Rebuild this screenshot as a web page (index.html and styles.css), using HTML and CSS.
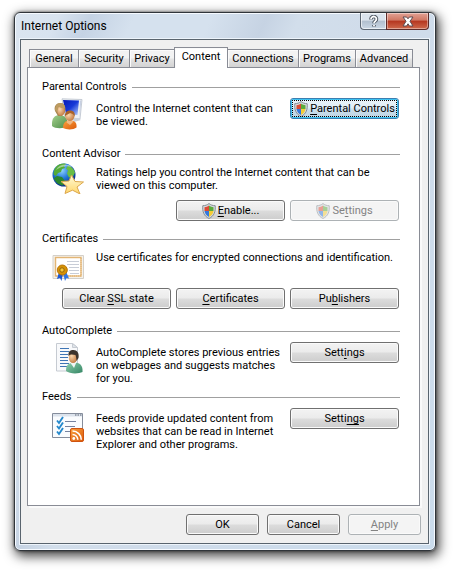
FILE: index.html
```html
<!DOCTYPE html>
<html lang="en">
<head>
<meta charset="utf-8">
<title>Internet Options</title>
<link rel="stylesheet" href="styles.css">
</head>
<body>
<svg class="defs" width="0" height="0" aria-hidden="true">
  <defs>
    <linearGradient id="screen" x1="0" y1="0" x2="1" y2="1"><stop offset="0" stop-color="#0719b5"/><stop offset=".5" stop-color="#1639d8"/><stop offset="1" stop-color="#b9d2fb"/></linearGradient>
    <linearGradient id="green" x1="0" y1="0" x2="1" y2="1"><stop offset="0" stop-color="#a5d18d"/><stop offset="1" stop-color="#4c8b48"/></linearGradient>
    <linearGradient id="teal" x1="0" y1="0" x2="1" y2="1"><stop offset="0" stop-color="#8fd0ae"/><stop offset="1" stop-color="#348564"/></linearGradient>
    <linearGradient id="orange" x1="0" y1="0" x2="1" y2="1"><stop offset="0" stop-color="#f9a13d"/><stop offset="1" stop-color="#dc5a0b"/></linearGradient>
    <radialGradient id="skin" cx=".35" cy=".35" r=".7"><stop offset="0" stop-color="#fbd8ae"/><stop offset="1" stop-color="#c47b43"/></radialGradient>
    <radialGradient id="globe" cx=".4" cy=".3" r=".7"><stop offset="0" stop-color="#8fd4ff"/><stop offset=".5" stop-color="#2378d8"/><stop offset="1" stop-color="#072c86"/></radialGradient>
    <linearGradient id="star" x1="0" y1="0" x2="0" y2="1"><stop offset="0" stop-color="#fffbd8"/><stop offset="1" stop-color="#ffd66a"/></linearGradient>
    <symbol id="shield" viewBox="0 0 14 16">
      <path d="M7 .5C5.500 2 3 2.700.8 2.700.3 8.500 1.800 13 7 15.500 12.200 13 13.700 8.500 13.200 2.700 11 2.700 8.500 2 7 .5z" fill="#d5dade" stroke="#858c92"/>
      <path d="M7 2.500C5.500 3.600 4 4 2.500 4.200V8H7z" fill="#dd4b34"/>
      <path d="M7 2.500c1.500 1.100 3 1.500 4.500 1.700V8H7z" fill="#5cab3c"/>
      <path d="M2.500 8C2.900 10.600 4.300 12.600 7 13.900V8z" fill="#3478dc"/>
      <path d="M11.500 8c-.4 2.600-1.800 4.600-4.500 5.900V8z" fill="#f5cc36"/>
    </symbol>
  </defs>
</svg>
<main class="window">
  <header class="titlebar">
    <h1 class="title">Internet Options</h1>
    <div class="caption">
      <button class="cap help" type="button" aria-label="Help"><svg width="10" height="13" viewBox="0 0 10 13" fill="none"><path d="M2 4.500V4a2.700 2.500 0 1 1 4.500 1.900C5.400 6.700 5 7 5 8.300M5 10v1.500" stroke="#4b545f" stroke-width="3.600"/><path d="M2 4.200V4a2.700 2.500 0 1 1 4.500 1.900C5.400 6.700 5 7 5 8.200M5 10v1.200" stroke="#fff" stroke-width="1.800"/></svg></button>
      <button class="cap close" type="button" aria-label="Close"><svg width="12" height="11" viewBox="0 0 12 11"><path d="M1 1h3.600L6 2.800 7.400 1H11L8 5.300 11 10H7.400L6 7.800 4.600 10H1l3-4.700z" fill="#fff" stroke="#5d4a51"/></svg></button>
    </div>
  </header>
  <div class="client">
    <div class="tabs" role="tablist">
      <button class="tab" type="button" role="tab">General</button>
      <button class="tab" type="button" role="tab">Security</button>
      <button class="tab" type="button" role="tab">Privacy</button>
      <button class="tab active" type="button" role="tab" aria-selected="true">Content</button>
      <button class="tab" type="button" role="tab">Connections</button>
      <button class="tab" type="button" role="tab">Programs</button>
      <button class="tab" type="button" role="tab">Advanced</button>
    </div>
    <div class="panel" role="tabpanel">
      <section class="group">
        <h2 class="heading">Parental Controls</h2>
        <div class="body">
          <svg class="icon" width="32" height="32" viewBox="0 0 32 32">
            <path d="M10 .8 30 1.500 28 21 13 19z" fill="#eef1f5" stroke="#b9c0cb" stroke-width=".8"/>
            <path d="M11 2 27 2.500 25.500 17 14 16z" fill="url(#screen)"/>
            <path d="M28 2.500 29.500 2.500 27.500 19z" fill="#c7d0e2"/>
            <path d="M20 20h6l3 2-7 2z" fill="#c9d0da"/>
            <path d="M0 28C-.5 21 2 17.500 7 17s9 3 9 11c-4 3-13 3-16 0z" fill="url(#green)"/>
            <path d="M3 13C1.500 8 4.500 5 8 5s6.500 3 5 9l-3 4H6z" fill="#a98650"/>
            <ellipse cx="9" cy="12.800" rx="3.800" ry="5" fill="url(#skin)"/>
            <path d="M3 12C3.500 7 5.500 5 8.500 5s4.500 2 4.500 5C9.500 11 7.500 9 6.500 8.500c0 2-1 3-1.500 5.500z" fill="#bd9c61"/>
            <path d="M11 30c0-5 2-7.500 7-7.500s7 2.500 6.500 7c-3 2.500-10 2.500-13.500.5z" fill="url(#orange)"/>
            <path d="M14.500 24.500 18 27l3-3-1-3h-4z" fill="#efb883"/>
            <circle cx="17.800" cy="18.300" r="4.600" fill="url(#skin)"/>
            <path d="M13 18.500c-.5-4 2-6 5-6s5.500 2 4.700 6c-1-2.500-2.700-3-4.700-3.500-1.500 1.500-3.500 1-5 3.500z" fill="#a9622a"/>
          </svg>
          <p class="text">Control the Internet content that can<br>be viewed.</p>
          <button class="btn focused" type="button"><svg class="shield" width="14" height="16"><use href="#shield"/></svg><span><u>P</u>arental Controls</span></button>
        </div>
      </section>
      <section class="group">
        <h2 class="heading">Content Advisor</h2>
        <div class="body wide">
          <svg class="icon" width="32" height="32" viewBox="0 0 32 32">
            <circle cx="12" cy="13" r="11.500" fill="url(#globe)"/>
            <path d="M4 5C7 1.500 12 1 14 2l-2 2 1 2-3 1-1 3-3 1-2 3-2-1C1 11 2 7 4 5z" fill="#55ab37"/>
            <path d="M16 3.500c3 .500 6 3.500 7 7l-2 4-4 1-2-4 1-3-2-2z" fill="#69bd45"/>
            <path d="m5 14 5 1 3 4-2 4.500C6 23 2.500 19 2 16z" fill="#2b872d"/>
            <path d="M4 8C7 2 16 1 20 5c-6-2-12 0-16 3z" fill="#fff" opacity=".45"/>
            <path d="m19.500 13 3.500 6.500 8.500.5-6.500 5 3 7-7.500-3.800-7.500 3.300 2-7-6-5 8-.5z" fill="url(#star)" stroke="#dba64b" stroke-linejoin="round"/>
          </svg>
          <p class="text">Ratings help you control the Internet content that can be<br>viewed on this computer.</p>
        </div>
        <div class="actions">
          <button class="btn" type="button"><svg class="shield" width="14" height="16"><use href="#shield"/></svg><span><u>E</u>nable...</span></button>
          <button class="btn" type="button" disabled><svg class="shield" width="14" height="16"><use href="#shield"/></svg><span>Se<u>t</u>tings</span></button>
        </div>
      </section>
      <section class="group">
        <h2 class="heading">Certificates</h2>
        <div class="body wide">
          <svg class="icon" width="32" height="35" viewBox="0 0 32 35">
            <path d="M1 8.500h30.500v23H1z" fill="#f4f2ed" stroke="#d4d0c9"/>
            <path d="M3.500 10.500h25.500v18.500H3.500z" fill="#fff" stroke="#e9bd7d" stroke-width="1.500"/>
            <path d="M3.500 10.500h25.500v18.500H3.500z" fill="none" stroke="#d9a868" stroke-dasharray="1 1" stroke-width=".7"/>
            <path d="M15 14.500h12M15 17.500h12M17 20.500h10M17 23.500h10M18 26.500h9" stroke="#c8cdd7"/>
            <path d="m7 25-2 7 3-1 1.500 3L11 26z" fill="#1c58d3"/>
            <path d="m11 26 2 8 1.500-3 2.500.5-3-7z" fill="#2f76e6"/>
            <circle cx="10.300" cy="23" r="5" fill="#d69305" stroke="#b97507"/>
            <circle cx="10" cy="23" r="2.200" fill="#f5ca3c" stroke="#94600b"/>
          </svg>
          <p class="text">Use certificates for encrypted connections and identification.</p>
        </div>
        <div class="actions">
          <button class="btn" type="button"><span>Clear <u>S</u>SL state</span></button>
          <button class="btn" type="button"><span><u>C</u>ertificates</span></button>
          <button class="btn" type="button"><span>Pu<u>b</u>lishers</span></button>
        </div>
      </section>
      <section class="group">
        <h2 class="heading">AutoComplete</h2>
        <div class="body">
          <svg class="icon" width="32" height="32" viewBox="0 0 32 32">
            <path d="M4.500 1.500h16l5 4V29h-21z" fill="#f8f9fb" stroke="#c6cbd2"/>
            <path d="M20.500 1.500v4h5z" fill="#dfe4ea" stroke="#c6cbd2"/>
            <path d="M8 6.500h9M8 9.500h9M8 12.500h8M8 15.500h8M8 18.500h8M8 21.500h9M8 24.500h7" stroke="#3f75b5"/>
            <path d="M14 29c0-6 2-8 8-8.500 6 0 9 3 8.500 9.500-4 2-13 2-16.500-1z" fill="url(#teal)"/>
            <path d="m18.500 21 3.500 5 2.500-6h-5z" fill="#f2f5f4"/>
            <ellipse cx="21" cy="15.500" rx="4.200" ry="5.500" fill="url(#skin)"/>
            <path d="M16.500 14C16 9.500 18 8 21.500 8s6 3 5 8l-2 3c0-3-.5-4-1-6-2 0-4.500-1.500-7 1z" fill="#3c332c"/>
          </svg>
          <p class="text">AutoComplete stores previous entries<br>on webpages and suggests matches<br>for you.</p>
          <button class="btn" type="button"><span>Sett<u>i</u>ngs</span></button>
        </div>
      </section>
      <section class="group">
        <h2 class="heading">Feeds</h2>
        <div class="body">
          <svg class="icon" width="32" height="35" viewBox="0 0 32 35">
            <path d="M.5 5.500h30v24H.5z" fill="#fafcfe" stroke="#858d9c"/>
            <path d="M1 6h29v2.500H1z" fill="#dce3ec"/>
            <path d="M23 7h1.500M25.500 7H27M28 7h1.500" stroke="#596273"/>
            <path d="M13 13.500h11M13 18.500h10M13 23.500h6" stroke="#7683a0"/>
            <path d="m5 12.500 2 2.500 4-6M5 18l2 2.500 4-6M5 23.500 7 26l4-6" fill="none" stroke="#2488cc" stroke-width="1.900"/>
            <rect x="18.500" y="20.500" width="13" height="13" rx="1.500" fill="url(#orange)" stroke="#cf5310"/>
            <circle cx="21.800" cy="30.500" r="1.400" fill="#fff"/>
            <path d="M20.500 26.500a5.300 5.300 0 0 1 5.300 5.300M20.500 23a8.800 8.800 0 0 1 8.800 8.800" fill="none" stroke="#fff" stroke-width="1.600"/>
          </svg>
          <p class="text">Feeds provide updated content from<br>websites that can be read in Internet<br>Explorer and other programs.</p>
          <button class="btn" type="button"><span>Setti<u>ng</u>s</span></button>
        </div>
      </section>
    </div>
    <footer class="footer">
      <button class="btn small" type="button">OK</button>
      <button class="btn small" type="button">Cancel</button>
      <button class="btn small" type="button" disabled><span><u>A</u>pply</span></button>
    </footer>
  </div>
</main>
</body>
</html>
```
FILE: styles.css
```css
* { box-sizing: border-box; }

body {
  margin: 0;
  min-height: 100vh;
  padding: 12px 18px 19px 14px;
  display: flex;
  flex-direction: column;
  background: #fff;
  color: #000;
  font: 11px/13px Roboto, sans-serif;
}

.defs { position: absolute; }

.window {
  flex: 1;
  display: flex;
  flex-direction: column;
  padding: 0 6px 6px 5px;
  border: 1px solid #30353a;
  border-radius: 6px;
  background: linear-gradient(115deg, #dbe5f0 0, #d8e3ef 40px, #c5d3e4 70px, #d5e1ee 110px, #d5e1ee 180px, #c6d3e3 230px, #d2deeb 260px, #d0dcea 330px, #cbdcec 100%);
  box-shadow: inset 0 0 0 1px #f6faff, 0 0 3px rgba(0, 0, 0, .6), 2px 4px 12px 1px rgba(0, 0, 0, .75);
}

.titlebar {
  display: flex;
  justify-content: space-between;
  align-items: flex-start;
  height: 26px;
}

.title {
  margin: 0;
  padding-left: 1px;
  font-size: 12px;
  font-weight: 400;
  line-height: 26px;
}

.caption { display: flex; }

.cap {
  display: flex;
  align-items: center;
  justify-content: center;
  height: 17px;
  padding: 0;
  border: 1px solid #5c6773;
  border-top: 0;
  box-shadow: inset 0 0 0 1px rgba(255, 255, 255, .6);
}

.help {
  width: 26px;
  border-right: 0;
  border-radius: 0 0 0 4px;
  background: linear-gradient(#dbe3ec 45%, #b1bfce 50%, #cbd8e5);
}

.close {
  width: 43px;
  border-color: #5d2b29;
  border-radius: 0 0 4px 0;
  background: linear-gradient(#e3a295, #d07763 45%, #b5361f 50%, #cf6a4d);
  box-shadow: inset 0 0 0 1px rgba(255, 255, 255, .4);
}

.client {
  flex: 1;
  display: flex;
  flex-direction: column;
  padding: 7px 7px 8px 6px;
  border: 1px solid #59646e;
  outline: 1px solid #edf4fb;
  background: #f0f0f0;
}

.tabs {
  display: grid;
  grid-template-columns: 49fr 51fr 45fr 54fr 70fr 57fr 58fr;
  align-items: end;
  padding: 0 8px 0 2px;
}

.tab {
  height: 18px;
  padding: 0;
  border: 1px solid #898c95;
  border-right-width: 0;
  border-bottom: 0;
  background: linear-gradient(#f3f3f3 45%, #e3e3e3 55%, #d3d3d3);
  box-shadow: inset 1px 1px #fbfbfb;
  color: #000;
  font: inherit;
}

.tab:last-child { border-right-width: 1px; }

.tab.active {
  height: 21px;
  margin-bottom: -1px;
  padding-bottom: 3px;
  border-right-width: 1px;
  background: #fff;
  z-index: 1;
}

.tab.active + .tab { border-left: 0; }

.panel {
  flex: 1;
  display: grid;
  grid-template-rows: 67px 85px 92px 66px auto;
  grid-template-columns: minmax(0, 1fr);
  margin-right: 1px;
  padding: 12px 19px 12px 14px;
  border: 1px solid #898c95;
  background: #fff;
  box-shadow: 2px 2px #fafafa;
}

.heading {
  display: flex;
  align-items: center;
  gap: 5px;
  margin: 0;
  font-size: 11px;
  font-weight: 400;
  line-height: 14px;
}

.heading::after {
  content: "";
  flex: 1;
  height: 1px;
  background: #a0a0a0;
}

.body {
  display: flex;
  align-items: flex-start;
  gap: 12px;
  padding: 4px 1px 0 10px;
}

.body.wide { padding-top: 1px; }

.icon { flex: none; }

.text {
  flex: 1;
  min-width: 0;
  margin: 0;
  padding-top: 4px;
  white-space: nowrap;
}

.actions {
  display: flex;
  justify-content: flex-end;
  gap: 5px;
  padding: 6px 1px 0 0;
}

.btn {
  display: flex;
  flex: none;
  align-items: center;
  justify-content: center;
  gap: 2px;
  width: 109px;
  height: 21px;
  padding: 0;
  border: 1px solid #707070;
  border-radius: 3px;
  background: linear-gradient(#f3f3f3, #ebebeb 48%, #dcdcdc 52%, #cdcdcd);
  box-shadow: inset 0 0 0 1px #fafafa;
  color: #000;
  font: inherit;
  white-space: nowrap;
}

.btn u { text-underline-offset: 2px; }

.btn.focused {
  border-color: #3c7fb1;
  background: linear-gradient(#eaf3f9, #dfedf6 48%, #cbdfec 52%, #bdd4e3);
  box-shadow: inset 0 0 0 1px #3fc3f2;
  outline: 1px dotted #000;
  outline-offset: -3px;
}

.btn:disabled {
  border-color: #adb2b5;
  background: #f4f4f4;
  color: #838383;
}

.btn:disabled .shield { opacity: .5; }

.footer {
  display: flex;
  justify-content: flex-end;
  gap: 8px;
  padding-top: 8px;
}

.btn.small { width: 73px; }
```
